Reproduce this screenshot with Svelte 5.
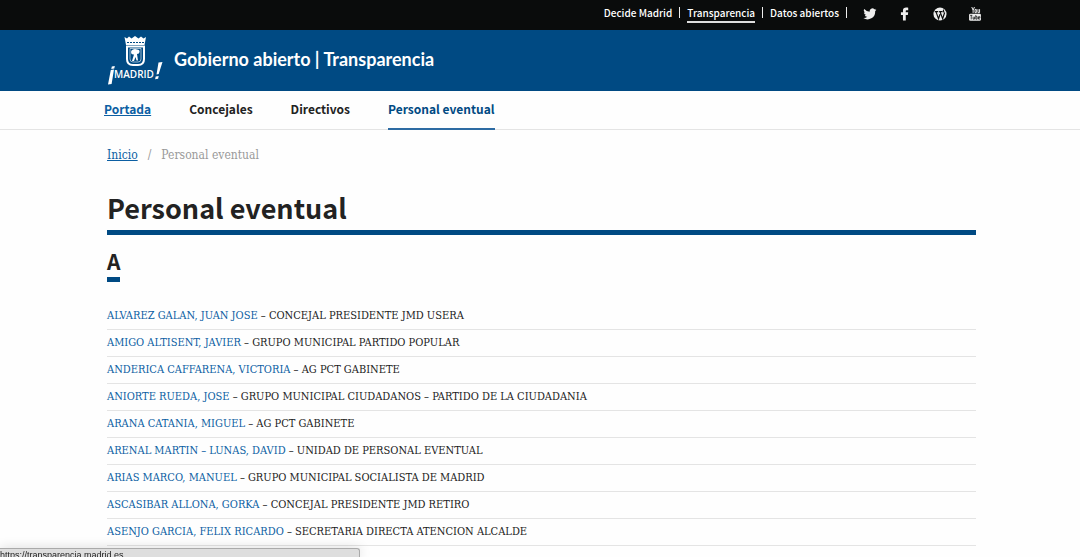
<script>
  const sections = ['Portada', 'Concejales', 'Directivos', 'Personal eventual'];

  const people = [
    { name: 'ALVAREZ GALAN, JUAN JOSE', post: 'CONCEJAL PRESIDENTE JMD USERA' },
    { name: 'AMIGO ALTISENT, JAVIER', post: 'GRUPO MUNICIPAL PARTIDO POPULAR' },
    { name: 'ANDERICA CAFFARENA, VICTORIA', post: 'AG PCT GABINETE' },
    { name: 'ANIORTE RUEDA, JOSE', post: 'GRUPO MUNICIPAL CIUDADANOS – PARTIDO DE LA CIUDADANIA' },
    { name: 'ARANA CATANIA, MIGUEL', post: 'AG PCT GABINETE' },
    { name: 'ARENAL MARTIN – LUNAS, DAVID', post: 'UNIDAD DE PERSONAL EVENTUAL' },
    { name: 'ARIAS MARCO, MANUEL', post: 'GRUPO MUNICIPAL SOCIALISTA DE MADRID' },
    { name: 'ASCASIBAR ALLONA, GORKA', post: 'CONCEJAL PRESIDENTE JMD RETIRO' },
    { name: 'ASENJO GARCIA, FELIX RICARDO', post: 'SECRETARIA DIRECTA ATENCION ALCALDE' },
  ];
</script>

<div class="topbar">
  <ul class="sites">
    <li><a href="#decide">Decide Madrid</a></li>
    <li><a href="#transparencia" class="current">Transparencia</a></li>
    <li><a href="#datos">Datos abiertos</a></li>
  </ul>
  <div class="social">
    <a href="#twitter" aria-label="Twitter">
      <svg viewBox="0 0 24 24" width="14" height="14">
        <path d="M23 4.600a9 9 0 0 1-2.600.8 4.700 4.700 0 0 0 2-2.600 9 9 0 0 1-2.900 1.200 4.600 4.600 0 0 0-7.900 4.200A13 13 0 0 1 2.200 3.400a4.600 4.600 0 0 0 1.400 6.200A4.600 4.600 0 0 1 1.500 9v.1a4.600 4.600 0 0 0 3.700 4.500 4.600 4.600 0 0 1-2.100.1 4.600 4.600 0 0 0 4.300 3.200A9.300 9.300 0 0 1 .6 18.900a13 13 0 0 0 20.200-11.700A9 9 0 0 0 23 4.600z" />
      </svg>
    </a>
    <a href="#facebook" aria-label="Facebook">
      <svg viewBox="0 0 24 24" width="14" height="14">
        <path d="M8.500 23V13.500H5V9h3.500V6C8.500 2.500 10.700 1 14 1c1.500 0 2.900.1 3.500.2v4.300h-2.300c-1.600 0-1.900.6-1.900 1.700V9h4.200l-.6 4.500h-3.600V23z" />
      </svg>
    </a>
    <a href="#wordpress" aria-label="WordPress">
      <svg viewBox="0 0 24 24" width="14" height="14">
        <circle cx="12" cy="12" r="11.200" />
        <path class="cut" d="M3 8h6M10.500 8h6M5 8l4.500 12L12 12.500M12 8l4.500 12L20 9.500" />
        <path class="cut" d="M18.500 4.500c-1.500 1.500-.8 3 .3 4.800" />
      </svg>
    </a>
    <a href="#youtube" aria-label="YouTube">
      <svg viewBox="0 0 24 26" width="14" height="14">
        <path class="line" d="M6 0l2.500 6v5M11 0L8.500 6M12 4.500h2.500v6H12zM17.500 4v6.500h3V4" />
        <rect x="1" y="12.500" width="22" height="13" rx="2.500" />
        <path class="cut thin" d="M3 15.500h4M5 15.500V23M8.500 18v4.500h2.500V18M13.500 15v7.500H16V18h-2.500M21 22.500h-2.500V18H21v2.300h-2.500" />
      </svg>
    </a>
  </div>
</div>

<header>
  <a href="#inicio" class="brand" aria-label="Madrid">
    <svg viewBox="0 0 56 54" width="56" height="54">
      <path d="M17.500 3l2.500 1.500 2-2L24.500 4.500 28 2l3.500 2.500L34 2.500l2.500 2 2.500-1.500-1.500 8H19z" />
      <path class="dots" d="M20 8.500h17" />
      <path class="shield" d="M20 12.500h17v12.500q0 6-6 6h-5q-6 0-6-6z" />
      <path class="inner" d="M23 14.500h11v10.500q0 3-3 3h-5q-3 0-3-3z" />
      <path d="M24 18q0-2 2-2.500 2-1 4 0 3 0 2.500 2.500 0 2-2.500 2l1 6.500h-1.500L28.500 23 27 27h-2l2-6.500q-3 .5-3-2.500z" />
      <path d="M4.800 32.500l3-.5-.5 2.500-3 .5zM3.800 36l3.200-.5L4.600 50l-3.600.5z" />
      <path d="M51.500 28.500l4-.6L51.700 40l-2.200.5zM48.700 42.500l3-.5-.6 2.700-3 .5z" />
      <text x="7" y="44">MADRID</text>
    </svg>
  </a>
  <p class="title">Gobierno abierto | Transparencia</p>
</header>

<nav aria-label="Secciones">
  {#each sections as section, i}
    <a
      href="#{section}"
      class:home={i === 0}
      class:active={i === 3}
      aria-current={i === 3 ? 'page' : undefined}>{section}</a
    >
  {/each}
</nav>

<main>
  <div class="breadcrumb">
    <a href="#inicio">Inicio</a>
    <span>/</span>
    <span>Personal eventual</span>
  </div>

  <h1>Personal eventual</h1>
  <h2>A</h2>

  <ul class="people">
    {#each people as person}
      <li><a href="#persona">{person.name}</a> – {person.post}</li>
    {/each}
  </ul>
</main>

<div class="status">https://transparencia.madrid.es</div>

<style>
  :global(body) {
    background: #fefefe;
    color: #222;
    font-family: 'Noto Sans CJK SC', 'Noto Sans', sans-serif;
  }

  a {
    color: #0c5fa3;
    text-decoration: none;
  }

  ul {
    list-style: none;
    margin: 0;
    padding: 0;
  }

  .topbar {
    display: flex;
    justify-content: flex-end;
    gap: 16px;
    height: 30px;
    padding-right: 98px;
    background: #0a0c0c;
  }

  .sites {
    display: flex;
    font-size: 10px;
    font-weight: 500;
    line-height: 20px;
  }

  .sites li {
    display: flex;
    padding-top: 3px;
  }

  .sites li::after {
    content: '';
    width: 1px;
    height: 11px;
    margin: 4px 7px 0;
    background: #eee;
  }

  .sites li:last-child::after {
    margin-right: 0;
  }

  .topbar a {
    color: #fff;
  }

  .sites a {
    height: 18px;
  }

  .sites .current {
    border-bottom: 2px solid #ddd;
  }

  .social {
    display: flex;
    gap: 21px;
    padding-top: 7px;
  }

  .social svg {
    display: block;
    fill: #eee;
  }

  .social .cut {
    fill: none;
    stroke: #0a0c0c;
    stroke-width: 2;
  }

  .social .thin {
    stroke-width: 1.4;
  }

  .social .line {
    fill: none;
    stroke: #eee;
    stroke-width: 1.8;
  }

  header {
    display: flex;
    gap: 11px;
    height: 61px;
    padding-left: 107px;
    background: #004a83;
  }

  .brand {
    padding-top: 4px;
  }

  .brand svg {
    display: block;
    fill: #fff;
  }

  .brand .shield,
  .brand .inner {
    fill: none;
    stroke: #fff;
    stroke-width: 2;
  }

  .brand .inner {
    stroke-width: 0.6;
  }

  .brand .dots {
    stroke: #004a83;
    stroke-dasharray: 2 1;
  }

  .brand text {
    font: 600 10px 'Open Sans', sans-serif;
  }

  .title {
    margin: 0;
    color: #fff;
    font: 700 18px/58px Lato, sans-serif;
  }

  nav {
    display: flex;
    gap: 38px;
    height: 38px;
    padding-left: 104px;
    border-bottom: 1px solid #e4e4e4;
    font-size: 12px;
    font-weight: 700;
    line-height: 36px;
  }

  nav a {
    height: 37px;
    color: #222;
  }

  nav .home {
    color: #0c5fa3;
    text-decoration: underline;
  }

  nav .active {
    border-bottom: 2px solid #2d6ba3;
    color: #004a83;
  }

  main {
    padding: 14px 104px 0 107px;
  }

  .breadcrumb {
    display: flex;
    gap: 10px;
    color: #999;
    font: 12px/22px 'DejaVu Serif Condensed', 'DejaVu Serif', serif;
  }

  .breadcrumb a {
    text-decoration: underline;
  }

  h1 {
    margin: 20px 0 0;
    padding-bottom: 1px;
    border-bottom: 5px solid #004a83;
    font-size: 27px;
    line-height: 43px;
  }

  h2 {
    width: 13px;
    margin: 11px 0 21px;
    padding-bottom: 1px;
    border-bottom: 5px solid #004a83;
    font-size: 21px;
    line-height: 30px;
  }

  .people {
    font: 11px/26px 'DejaVu Serif Condensed', 'DejaVu Serif', serif;
  }

  .people li {
    border-bottom: 1px solid #e4e4e4;
  }

  .status {
    position: fixed;
    bottom: 0;
    left: 0;
    box-sizing: border-box;
    width: 360px;
    height: 9px;
    overflow: hidden;
    border: 1px solid #aaa;
    border-bottom: 0;
    border-left: 0;
    border-radius: 0 3px 0 0;
    background: #dedede;
    box-shadow: 0 0 12px rgb(0 0 0 / 15%);
    color: #222;
    font: 9px/13px 'Liberation Sans', sans-serif;
  }
</style>
